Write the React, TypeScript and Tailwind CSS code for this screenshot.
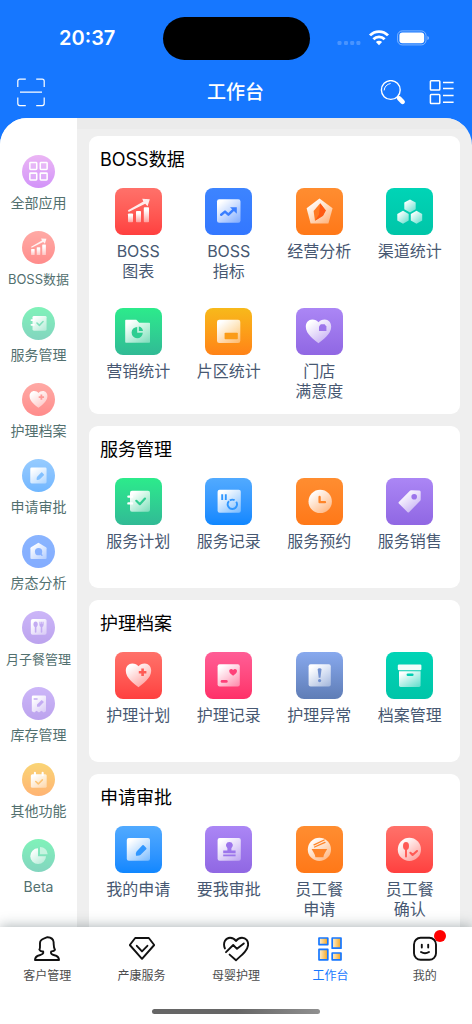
import React, { useState } from 'react';
import clsx from 'clsx';

type GlyphName =
  | 'apps' | 'chart' | 'trend' | 'pentagon' | 'hexagons' | 'folder' | 'region' | 'heartHome'
  | 'notebook' | 'record' | 'clock' | 'tag' | 'heartPlus' | 'heartNote' | 'alert' | 'archive'
  | 'edit' | 'stamp' | 'bowl' | 'spoon' | 'house' | 'meal' | 'stock' | 'calendar' | 'pie';

type Tone =
  | 'red' | 'blue' | 'orange' | 'teal' | 'green' | 'amber' | 'purple' | 'sky' | 'pink' | 'slate' | 'orchid';

interface AppItem {
  label: string;
  glyph: GlyphName;
  tone: Tone;
}

interface Section {
  title: string;
  items: AppItem[];
}

// Fondo del mosaico y color de los recortes interiores
const tones: Record<Tone, string> = {
  red: 'from-[#ff716a] to-[#ff3f3f] text-[#ff5a55]',
  blue: 'from-[#3d84ff] to-[#3377ff] text-[#3a7eff]',
  orange: 'from-[#ff8d30] to-[#ff7817] text-[#ff8428]',
  teal: 'from-[#00d4b6] to-[#00c5a8] text-[#00cdb0]',
  green: 'from-[#2ceb8b] to-[#31ba95] text-[#2fcd91]',
  amber: 'from-[#f7b91b] to-[#ff8217] text-[#fb9c18]',
  purple: 'from-[#ab86f5] to-[#9067e3] text-[#9c75eb]',
  sky: 'from-[#51aaff] to-[#0f87ff] text-[#3097ff]',
  pink: 'from-[#ff5d96] to-[#ff2f68] text-[#ff4079]',
  slate: 'from-[#88a9ee] to-[#5f7db6] text-[#7391d0]',
  orchid: 'from-[#df85ee] to-[#b54bf5] text-[#c060f0]',
};

const categories: AppItem[] = [
  { label: '全部应用', glyph: 'apps', tone: 'orchid' },
  { label: 'BOSS数据', glyph: 'chart', tone: 'red' },
  { label: '服务管理', glyph: 'notebook', tone: 'green' },
  { label: '护理档案', glyph: 'heartPlus', tone: 'red' },
  { label: '申请审批', glyph: 'edit', tone: 'sky' },
  { label: '房态分析', glyph: 'house', tone: 'blue' },
  { label: '月子餐管理', glyph: 'meal', tone: 'purple' },
  { label: '库存管理', glyph: 'stock', tone: 'purple' },
  { label: '其他功能', glyph: 'calendar', tone: 'amber' },
  { label: 'Beta', glyph: 'pie', tone: 'green' },
];

const sections: Section[] = [
  {
    title: 'BOSS数据',
    items: [
      { label: 'BOSS\n图表', glyph: 'chart', tone: 'red' },
      { label: 'BOSS\n指标', glyph: 'trend', tone: 'blue' },
      { label: '经营分析', glyph: 'pentagon', tone: 'orange' },
      { label: '渠道统计', glyph: 'hexagons', tone: 'teal' },
      { label: '营销统计', glyph: 'folder', tone: 'green' },
      { label: '片区统计', glyph: 'region', tone: 'amber' },
      { label: '门店\n满意度', glyph: 'heartHome', tone: 'purple' },
    ],
  },
  {
    title: '服务管理',
    items: [
      { label: '服务计划', glyph: 'notebook', tone: 'green' },
      { label: '服务记录', glyph: 'record', tone: 'sky' },
      { label: '服务预约', glyph: 'clock', tone: 'orange' },
      { label: '服务销售', glyph: 'tag', tone: 'purple' },
    ],
  },
  {
    title: '护理档案',
    items: [
      { label: '护理计划', glyph: 'heartPlus', tone: 'red' },
      { label: '护理记录', glyph: 'heartNote', tone: 'pink' },
      { label: '护理异常', glyph: 'alert', tone: 'slate' },
      { label: '档案管理', glyph: 'archive', tone: 'teal' },
    ],
  },
  {
    title: '申请审批',
    items: [
      { label: '我的申请', glyph: 'edit', tone: 'sky' },
      { label: '要我审批', glyph: 'stamp', tone: 'purple' },
      { label: '员工餐\n申请', glyph: 'bowl', tone: 'orange' },
      { label: '员工餐\n确认', glyph: 'spoon', tone: 'red' },
    ],
  },
];

const soft = 'url(#glyph-soft)';
const rise = 'url(#glyph-rise)';
const heart = 'M23.5 35.3C20 32.5 10.8 26.5 10.8 18.8C10.8 14.5 13.6 11.5 17.2 11.5C20 11.5 22.4 12.8 23.5 14.2C24.6 12.8 27 11.5 29.8 11.5C33.4 11.5 36.2 14.5 36.2 18.8C36.2 26.5 27 32.5 23.5 35.3Z';
const cut = { fill: 'none', stroke: 'currentColor', strokeLinecap: 'round', strokeLinejoin: 'round' } as const;

const glyphs: Record<GlyphName, React.ReactNode> = {
  apps: (
    <g fill="#fff" fillOpacity="0.15" stroke="#fff" strokeWidth="2.2">
      <rect x="11.2" y="10.8" width="9.8" height="9.8" rx="1" />
      <rect x="26" y="10.8" width="9.8" height="9.8" rx="1" />
      <rect x="11.2" y="25.8" width="9.8" height="9.8" rx="1" />
      <rect x="26" y="25.8" width="9.8" height="9.8" rx="1" />
    </g>
  ),
  chart: (
    <>
      <rect x="13" y="25.5" width="5" height="8.8" rx="0.8" fill={rise} />
      <rect x="21" y="23" width="5" height="11.3" rx="0.8" fill={rise} />
      <rect x="28.8" y="19.3" width="5.2" height="15" rx="0.8" fill={rise} />
      <path d="M13 22.3L28.4 13.6L27.2 10.7L34.8 11.2L32.6 18.2L30.2 15.8L13.6 24Z" fill="#fff" fillOpacity="0.88" />
    </>
  ),
  trend: (
    <>
      <rect x="12" y="11.2" width="23.5" height="23.6" rx="2.2" fill={soft} />
      <path d="M16.2 26.8L20 23.6L23.4 26.6L28.6 21.6" strokeWidth="2.5" {...cut} />
      <path d="M25 19.2H31.8V25.8Z" fill="currentColor" />
    </>
  ),
  pentagon: (
    <>
      <path d="M23.5 10.6L36.6 20.3L32.4 35.6H14.6L10.6 20.3Z" fill={soft} />
      <path d="M24.2 15.2L29.8 22.6L27 27.8L19 32.8L17.6 23Z" fill="#ff7a24" />
      <path d="M24.2 15.2L29.8 22.6L27 27.8L19 32.8L23 26.5Z" fill="#ff5a12" />
    </>
  ),
  hexagons: (
    <g fill={soft}>
      <path d="M24 11.4L29.7 14.6V21.2L24 24.4L18.3 21.2V14.6Z" />
      <path d="M17 22.8L22.7 26V32.6L17 35.8L11.3 32.6V26Z" />
      <path d="M30.5 22.8L36.2 26V32.6L30.5 35.8L24.8 32.6V26Z" />
    </g>
  ),
  folder: (
    <>
      <path d="M11 11.7H21.3L24.2 14.8H34.2Q35 14.8 35 15.6V34Q35 34.8 34.2 34.8H11Q10.2 34.8 10.2 34V12.5Q10.2 11.7 11 11.7Z" fill={soft} />
      <path d="M22.2 19A5.6 5.6 0 1 0 27.8 24.8H22.2Z" fill="currentColor" />
      <path d="M23.8 18.6A5.2 5.2 0 0 1 28 22.9H23.8Z" fill="currentColor" />
    </>
  ),
  region: (
    <>
      <rect x="12" y="11.7" width="23.3" height="23.2" rx="2.2" fill={soft} />
      <rect x="19.6" y="24.8" width="13.2" height="6.4" rx="0.8" fill="currentColor" />
    </>
  ),
  heartHome: (
    <>
      <path d={heart} fill={soft} transform="translate(-1 0)" />
      <path d="M23 23V18.6L24.8 16.2H28.6L30.4 18.6V23Z" fill="currentColor" />
    </>
  ),
  notebook: (
    <>
      <rect x="15" y="12.7" width="20" height="21" rx="2" fill={soft} />
      <path d="M13.4 18.6H17M13.4 25.4H17" stroke="#fff" strokeWidth="2.4" strokeLinecap="round" />
      <path d="M21.3 22.8L24.8 26.2L30 20.6" strokeWidth="2.2" {...cut} />
    </>
  ),
  record: (
    <>
      <rect x="12.6" y="11.7" width="23.2" height="23" rx="2" fill={soft} />
      <path d="M17.2 16.2V22M20.8 16.2V22" stroke="currentColor" strokeWidth="1.9" />
      <path d="M24 23.2A4.6 4.6 0 0 0 27.4 31A4.6 4.6 0 0 0 31.2 23.8" strokeWidth="1.9" {...cut} strokeLinecap="butt" />
      <path d="M24.8 22.6A4.6 4.6 0 0 1 29.6 22.2" strokeWidth="1.9" {...cut} strokeLinecap="butt" />
    </>
  ),
  clock: (
    <>
      <circle cx="24.2" cy="23.4" r="11.7" fill={soft} />
      <path d="M23.6 19V24.2H29" strokeWidth="2.3" {...cut} />
    </>
  ),
  tag: (
    <>
      <path d="M24.2 12.6Q24.6 12.2 25.4 12.2L33.4 12.6Q34.7 12.7 34.7 14V21.6Q34.7 22.3 34.2 22.8L23 34.2Q22.3 34.8 21.6 34.2L12.8 25.4Q12.2 24.7 12.8 24Z" fill={soft} />
      <circle cx="28.2" cy="18.8" r="2.8" fill="currentColor" />
    </>
  ),
  heartPlus: (
    <>
      <path d={heart} fill={soft} />
      <path d="M27.6 16.4V24M23.8 20.2H31.4" stroke="currentColor" strokeWidth="2.6" />
    </>
  ),
  heartNote: (
    <>
      <rect x="12.6" y="12.3" width="22.2" height="22.2" rx="2" fill={soft} />
      <path d="M28.1 23.8C26.6 22.4 24.2 21.2 24.2 19C24.2 16.6 27 16.2 28.1 18C29.2 16.2 32 16.6 32 19C32 21.2 29.6 22.4 28.1 23.8Z" fill="currentColor" />
      <path d="M17 29.4H21.4" strokeWidth="2.6" {...cut} />
    </>
  ),
  alert: (
    <>
      <rect x="12.6" y="12.3" width="22.2" height="22.2" rx="2" fill={soft} />
      <path d="M21.7 17.6Q21.7 16.2 23.6 16.2Q25.5 16.2 25.5 17.6L24.5 25.8H22.7Z" fill="currentColor" />
      <circle cx="23.6" cy="28.6" r="1.6" fill="currentColor" />
    </>
  ),
  archive: (
    <>
      <rect x="11.8" y="12.6" width="23.6" height="5.6" rx="1.2" fill="#fff" fillOpacity="0.95" />
      <path d="M13 19.2H34.6V33.2Q34.6 34.9 33 34.9H14.6Q13 34.9 13 33.2Z" fill={soft} />
      <path d="M21.8 22.8H26.4" strokeWidth="2.4" {...cut} />
    </>
  ),
  edit: (
    <>
      <rect x="11.8" y="12" width="23.2" height="22.8" rx="2" fill={soft} />
      <path d="M21 29.8Q20.4 26.8 21.6 25.4L27.4 19.2Q28 18.6 28.7 19.2L31.3 21.9Q31.8 22.5 31.2 23.2L25.4 29Q24.4 30 21 29.8Z" fill="currentColor" />
    </>
  ),
  stamp: (
    <>
      <rect x="12.6" y="12" width="23.2" height="22.8" rx="2" fill={soft} />
      <path d="M24.4 16A3.4 3.4 0 0 1 26.4 22.2V24.4H30.6V27.2H18.2V24.4H22.4V22.2A3.4 3.4 0 0 1 24.4 16Z" fill="currentColor" />
      <path d="M18.2 29.4H30.6" stroke="currentColor" strokeWidth="1.8" />
    </>
  ),
  bowl: (
    <>
      <circle cx="23.4" cy="23.4" r="11.6" fill={soft} />
      <path d="M15.6 23H31.2L29 26.8Q27.6 29 27.4 31.2H19.4Q19.2 29 17.8 26.8Z" fill="currentColor" />
      <path d="M18 18.8L28.2 14M18.6 21L29 16.4" strokeWidth="1.3" {...cut} />
    </>
  ),
  spoon: (
    <>
      <circle cx="23.4" cy="23.4" r="11.6" fill={soft} />
      <ellipse cx="20" cy="20" rx="3" ry="4" fill="currentColor" />
      <path d="M20 22V30.6" strokeWidth="1.9" {...cut} />
      <path d="M24.4 26.8L26.6 29L31 25" strokeWidth="2.1" {...cut} />
    </>
  ),
  house: (
    <>
      <path d="M23.4 11L34.2 17.6Q35 18.2 35 19V32.6Q35 34.2 33.4 34.2H13.6Q12 34.2 12 32.6V19Q12 18.2 12.8 17.6Z" fill={soft} />
      <circle cx="23.6" cy="23.8" r="5.2" fill="currentColor" />
      <path d="M26 26.4L28.4 28.8" strokeWidth="2" {...cut} />
    </>
  ),
  meal: (
    <>
      <rect x="12.6" y="11.4" width="22.4" height="22.4" rx="2.6" fill={soft} />
      <ellipse cx="19.4" cy="18.8" rx="3" ry="4" fill="currentColor" />
      <path d="M19.4 20V30M27.8 22V30" strokeWidth="2.3" {...cut} />
      <path d="M24.8 15.4H26.4V18H27.2V15.4H28.4V18H29.2V15.4H30.8V20A3 3 0 0 1 24.8 20Z" fill="currentColor" />
    </>
  ),
  stock: (
    <>
      <path d="M15.8 12.2H32.4Q34.2 12.2 34.2 14V34.4L31 36.4L27.6 34L24.2 36.4L20.8 34L17.4 36.4L14 34.4V14Q14 12.2 15.8 12.2Z" fill={soft} />
      <path d="M17.4 17H21.4" strokeWidth="2.2" {...cut} />
      <path d="M21.4 28.2V25L28 18.4L31.2 21.4L24.8 28.2Z" fill="currentColor" />
    </>
  ),
  calendar: (
    <>
      <rect x="12.6" y="16" width="22.6" height="19.4" rx="2.2" fill={soft} />
      <path d="M18.4 13.8V17.4M29.4 13.8V17.4" stroke="#fff" strokeWidth="3" strokeLinecap="round" />
      <path d="M19.6 26.4L23.2 29.8L29 24" strokeWidth="2.2" {...cut} />
    </>
  ),
  pie: (
    <>
      <path d="M22.8 13.2A11.2 11.2 0 1 0 34.2 24.6H22.8Z" fill={soft} />
      <path d="M25.6 11.4A10.8 10.8 0 0 1 36.6 21.8H25.6Z" fill="#fff" fillOpacity="0.55" />
    </>
  ),
};

const Glyph: React.FC<{ name: GlyphName }> = ({ name }) => (
  <svg viewBox="0 0 47 47" className="h-full w-full" aria-hidden="true">
    {glyphs[name]}
  </svg>
);

const GlyphGradients = () => (
  <svg width="0" height="0" className="absolute" aria-hidden="true">
    <defs>
      <linearGradient id="glyph-soft" x1="0.1" y1="0" x2="0.9" y2="1">
        <stop offset="0.1" stopColor="#fff" />
        <stop offset="1" stopColor="#fff" stopOpacity="0.4" />
      </linearGradient>
      <linearGradient id="glyph-rise" x1="0" y1="0" x2="0" y2="1">
        <stop offset="0.2" stopColor="#fff" />
        <stop offset="1" stopColor="#fff" stopOpacity="0.45" />
      </linearGradient>
      <linearGradient id="tab-amber" x1="0" y1="0" x2="1" y2="0">
        <stop offset="0" stopColor="#fff3d6" />
        <stop offset="1" stopColor="#f5a41c" />
      </linearGradient>
    </defs>
  </svg>
);

const StatusBar = () => (
  <div className="grid h-[76px] grid-cols-[1fr_147px_1fr] items-center">
    <div className="pl-3 text-center text-xl font-semibold">20:37</div>
    <div className="h-[43px] rounded-full bg-black" />
    <div className="flex items-center justify-center pr-3.5">
      <svg viewBox="0 0 93 17" className="h-[17px] w-[93px]" fill="#fff" aria-hidden="true">
        <g fillOpacity="0.22">
          <rect x="0.5" y="11" width="4" height="4" rx="1.2" />
          <rect x="7" y="11" width="4" height="4" rx="1.2" />
          <rect x="13.2" y="11" width="4" height="4" rx="1.2" />
          <rect x="19.4" y="11" width="4" height="4" rx="1.2" />
        </g>
        <g fill="none" stroke="#fff" strokeWidth="2.8">
          <path d="M33 5.4A12.4 12.4 0 0 1 51 5.4" />
          <path d="M36.4 9.2A7.8 7.8 0 0 1 47.6 9.2" />
        </g>
        <path d="M42 15.2L38.9 12.1A4.3 4.3 0 0 1 45.1 12.1Z" />
        <rect x="60.6" y="0.9" width="28.4" height="14" rx="4.6" fill="none" stroke="#fff" strokeOpacity="0.45" />
        <rect x="62.4" y="2.6" width="24.8" height="10.6" rx="3" />
        <path d="M90.4 5.9Q92 6.5 92 8Q92 9.5 90.4 10.1Z" fillOpacity="0.5" />
      </svg>
    </div>
  </div>
);

const TitleBar = () => (
  <div className="grid grid-cols-[1fr_auto_1fr] items-center pt-0.5 pr-[17px] pb-2.5 pl-4">
    <button type="button" aria-label="扫一扫" className="justify-self-start">
      <svg viewBox="0 0 30 30" className="h-[30px] w-[30px]" fill="none" stroke="#fff" strokeWidth="1.2" aria-hidden="true">
        <path d="M1.8 9V3.2Q1.8 1.2 3.8 1.2H9.8M20.2 1.2H26.2Q28.2 1.2 28.2 3.2V9M28.2 19.6V25.6Q28.2 27.6 26.2 27.6H20.2M9.8 27.6H3.8Q1.8 27.6 1.8 25.6V19.6M4 14.2H26" />
      </svg>
    </button>
    <h1 className="text-[19px] leading-[30px] font-medium">工作台</h1>
    <div className="flex gap-[23px] justify-self-end">
      <button type="button" aria-label="搜索">
        <svg viewBox="0 0 26 26" className="h-[26px] w-[26px]" fill="none" stroke="#fff" aria-hidden="true">
          <circle cx="10.8" cy="10" r="9.4" strokeWidth="1.4" />
          <path d="M4.2 10A6.8 6.8 0 0 1 10.2 3.6" strokeWidth="1" strokeLinecap="round" />
          <path d="M17.4 16.6L19.2 18.4" strokeWidth="2" />
          <path d="M19.2 18.4L22.6 21.8" strokeWidth="4.6" strokeLinecap="round" />
        </svg>
      </button>
      <button type="button" aria-label="列表">
        <svg viewBox="0 0 26 26" className="h-[26px] w-[26px]" fill="none" stroke="#fff" strokeWidth="1.5" aria-hidden="true">
          <rect x="1.4" y="0.8" width="9.4" height="9.2" rx="0.8" />
          <rect x="1.4" y="14.4" width="9.4" height="9.2" rx="0.8" />
          <path d="M14 2.4H24.6M14 8.6H24.6M14 15.6H24.6M14 22.2H24.6" />
        </svg>
      </button>
    </div>
  </div>
);

const Sidebar: React.FC<{ items: AppItem[] }> = ({ items }) => (
  <nav aria-label="分类" className="flex w-[77px] shrink-0 flex-col gap-[18px] overflow-y-auto bg-white pt-[37px] [scrollbar-width:none]">
    {items.map((item) => (
      <button key={item.label} type="button" className="flex flex-col items-center gap-[5px]">
        <span className={clsx('h-[33px] w-[33px] rounded-full bg-linear-to-b opacity-60', tones[item.tone])}>
          <Glyph name={item.glyph} />
        </span>
        <span
          className={clsx(
            'leading-5 whitespace-nowrap text-[#52706f]',
            item.label.length > 4 ? 'text-[13px]' : 'text-sm'
          )}
        >
          {item.label}
        </span>
      </button>
    ))}
  </nav>
);

const SectionCard: React.FC<{ section: Section }> = ({ section }) => (
  <section className="min-h-[162px] shrink-0 rounded-[9px] bg-white pt-2.5 pr-[5px] pb-[13px] pl-1">
    <h2 className="mb-3.5 pl-[7px] text-lg leading-7 text-black">{section.title}</h2>
    <div className="grid grid-cols-4 gap-y-[27px]">
      {section.items.map((item) => (
        <button key={item.label} type="button" className="flex flex-col items-center gap-1.5">
          <span className={clsx('h-[47px] w-[47px] rounded-lg bg-linear-to-b', tones[item.tone])}>
            <Glyph name={item.glyph} />
          </span>
          <span className="min-h-10 text-base leading-5 whitespace-pre-line text-[#475872]">{item.label}</span>
        </button>
      ))}
    </div>
  </section>
);

const tabs = [
  {
    label: '客户管理',
    icon: (
      <path d="M5.4 13.6C6.8 11.6 5.4 8.6 6.2 5.8C7 2.8 9.6 2.6 13.6 1.2C17 1.4 19.2 2.8 19.6 6C19.8 9 19.4 11.6 21 13.8C20 15.6 17.2 15.4 17.2 15.4C16.2 17.6 17.8 18.6 20.4 19.2C23.4 19.9 25 20.8 25 24H1C1 20.8 2.6 19.9 5.6 19.2C8.2 18.6 9.8 17.6 9.2 15.4C7.6 15.6 6 15 5.4 13.6Z" />
    ),
  },
  {
    label: '产康服务',
    icon: (
      <>
        <path d="M6.2 2H19.8L25.2 9L13 22.8L0.8 9Z" />
        <path d="M7.8 9.8L13 15.4L18.4 9.8" />
      </>
    ),
  },
  {
    label: '母婴护理',
    icon: (
      <>
        <path d="M1.9 12.4C-0.6 6.2 3 1.7 7 1.7C10 1.7 11.8 3.2 13 5C14.2 3.2 16 1.7 19 1.7C23 1.7 25.4 5 25.1 9C24.6 15 18.4 19.4 13 24.2L6.6 18.6" />
        <path d="M3 16.2L10.2 9L14 12.8L20.8 7.4" />
      </>
    ),
  },
  {
    label: '工作台',
    icon: (
      <g stroke="#1677ff" fill="url(#tab-amber)" strokeWidth="1.7">
        <rect x="2" y="2" width="8.8" height="6.6" />
        <rect x="15.2" y="2" width="8.8" height="10.2" />
        <rect x="2" y="13.4" width="8.8" height="10.4" />
        <rect x="15.2" y="17" width="8.8" height="6.8" />
      </g>
    ),
  },
  {
    label: '我的',
    badge: true,
    icon: (
      <>
        <rect x="2" y="1.8" width="22" height="22" rx="6.6" />
        <path d="M9.8 8.6V11.6M16.2 8.6V11.6M9 16Q13 18.6 17 16" />
      </>
    ),
  },
];

const TabBar: React.FC<{ active: string; onChange: (label: string) => void }> = ({ active, onChange }) => (
  <footer className="relative z-10 bg-white pt-[9px] pb-2.5 shadow-[0_-1px_12px_rgba(50,70,75,0.4)]">
    <nav aria-label="主导航" className="grid grid-cols-5">
      {tabs.map((tab) => (
        <button
          key={tab.label}
          type="button"
          aria-current={active === tab.label ? 'page' : undefined}
          onClick={() => onChange(tab.label)}
          className="flex flex-col items-center gap-1.5"
        >
          <span className="relative">
            <svg
              viewBox="0 0 26 26"
              className="h-[26px] w-[26px]"
              fill="none"
              stroke="#111"
              strokeWidth="1.9"
              strokeLinecap="round"
              strokeLinejoin="round"
              aria-hidden="true"
            >
              {tab.icon}
            </svg>
            {tab.badge && <span className="absolute -top-1.5 -right-2 h-3 w-3 rounded-full bg-[#ff0000]" />}
          </span>
          <span className={clsx('text-xs leading-4', active === tab.label ? 'text-[#1677ff]' : 'text-[#4d4d4d]')}>
            {tab.label}
          </span>
        </button>
      ))}
    </nav>
    <div className="mx-auto mt-[25px] h-[5px] w-[168px] rounded-full bg-linear-to-r from-[#666] via-[#666] to-[#909090]" />
  </footer>
);

export default function App() {
  const [activeTab, setActiveTab] = useState('工作台');

  return (
    <div className="flex h-screen flex-col bg-[#1677ff] font-['Inter','Noto_Sans_CJK_SC',sans-serif]">
      <GlyphGradients />
      <header className="text-white">
        <StatusBar />
        <TitleBar />
      </header>
      <div className="flex min-h-0 flex-1 overflow-hidden rounded-t-[27px] bg-[#efefef]">
        <Sidebar items={categories} />
        <div className="flex min-w-0 flex-1 flex-col">
          <div className="h-[11px] shrink-0 bg-[#ebebeb]" />
          <main className="flex min-h-0 flex-1 flex-col gap-3 overflow-y-auto px-3 pt-[7px] [scrollbar-width:none]">
            {sections.map((section) => (
              <SectionCard key={section.title} section={section} />
            ))}
          </main>
        </div>
      </div>
      <TabBar active={activeTab} onChange={setActiveTab} />
    </div>
  );
}
